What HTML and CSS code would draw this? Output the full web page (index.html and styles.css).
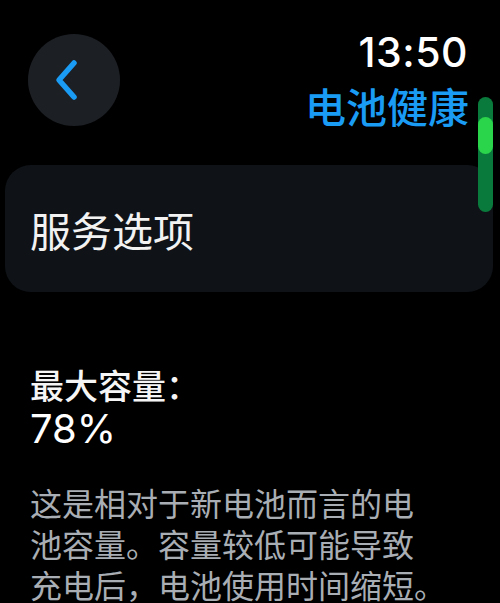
FILE: index.html
```html
<!DOCTYPE html>
<html lang="zh-CN">
<head>
<meta charset="utf-8">
<title>电池健康</title>
<link rel="stylesheet" href="styles.css">
</head>
<body>
<div class="screen">
  <header class="header">
    <div class="back">
      <svg width="30" height="42" viewBox="0 0 30 42"><path d="M22 4 L7 21 L22 38" fill="none" stroke="#1a9cf5" stroke-width="5.5" stroke-linecap="round" stroke-linejoin="round"/></svg>
    </div>
    <div class="titles">
      <div class="time">13:50</div>
      <div class="title">电池健康</div>
    </div>
  </header>
  <div class="card">服务选项</div>
  <section class="capacity">
    <div class="cap-label">最大容量：</div>
    <div class="cap-value">78%</div>
  </section>
  <p class="desc">这是相对于新电池而言的电<br>池容量。容量较低可能导致<br>充电后，电池使用时间缩短。</p>
  <div class="scroll"><div class="thumb"></div></div>
</div>
</body>
</html>
```
FILE: styles.css
```css
html, body {
  margin: 0;
  padding: 0;
  background: #000;
}
.screen {
  position: relative;
  width: 500px;
  height: 603px;
  overflow: hidden;
  background: #000;
  font-family: Inter, "Noto Sans CJK SC", sans-serif;
  color: #fff;
}
.header {
  display: flex;
  justify-content: space-between;
  align-items: flex-start;
  padding: 28px 32px 0 28px;
  height: 137px;
  box-sizing: border-box;
}
.back {
  width: 92px;
  height: 92px;
  margin-top: 6px;
  border-radius: 50%;
  background: #1c1f24;
  display: flex;
  align-items: center;
  justify-content: center;
}
.back svg {
  margin-right: 14px;
}
.titles {
  display: flex;
  flex-direction: column;
  align-items: flex-end;
}
.time {
  font-size: 41px;
  line-height: 48px;
  font-weight: 500;
  letter-spacing: 0.5px;
  color: #fff;
}
.title {
  font-family: "Noto Sans CJK SC", sans-serif;
  font-size: 41px;
  line-height: 50px;
  font-weight: 500;
  color: #1a9cf5;
  margin-top: 4px;
  margin-right: -1px;
}
.card {
  margin: 28px 7px 0 5px;
  height: 127px;
  border-radius: 26px;
  background: #0f1318;
  display: flex;
  align-items: center;
  padding-left: 25px;
  font-family: "Noto Sans CJK SC", sans-serif;
  font-size: 41px;
  color: #f2f2f2;
}
.capacity {
  padding: 74px 0 0 30px;
}
.cap-label {
  font-family: "Noto Sans CJK SC", sans-serif;
  font-size: 34px;
  line-height: 38px;
  font-weight: 500;
  color: #f5f5f5;
}
.cap-value {
  margin-top: 4px;
  font-size: 40px;
  line-height: 42px;
  font-weight: 400;
  color: #fff;
}
.desc {
  margin: 32px 0 0 30px;
  white-space: nowrap;
  font-family: "Noto Sans CJK SC", sans-serif;
  font-size: 32px;
  line-height: 41px;
  color: #a9aeb4;
}
.scroll {
  position: absolute;
  left: 478px;
  top: 97px;
  width: 15px;
  height: 115px;
  border-radius: 8px;
  background: #0a7a3c;
}
.thumb {
  margin-top: 20px;
  height: 37px;
  border-radius: 8px;
  background: #2bd54b;
}
```
